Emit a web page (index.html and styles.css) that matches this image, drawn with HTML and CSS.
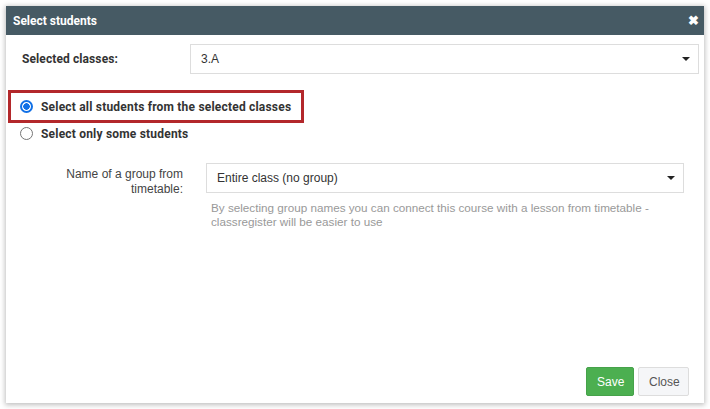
FILE: index.html
```html
<!DOCTYPE html>
<html lang="en">
  <head>
    <meta charset="UTF-8" />
    <title>Select students</title>
    <link rel="stylesheet" href="styles.css">
  </head>
  <body>
    <div class="modal">
      <div class="modal-head">
        <span class="modal-title">Select students</span>
        <span class="close-x">&#10006;</span>
      </div>
      <div class="modal-body">
        <div class="row">
          <label class="lbl">Selected classes:</label>
          <div class="select select-wide">
            <span>3.A</span>
            <span class="caret"></span>
          </div>
        </div>

        <div class="choices">
          <div class="choice marked">
            <span class="radio on"></span>
            <span>Select all students from the selected classes</span>
          </div>
          <div class="choice">
            <span class="radio"></span>
            <span>Select only some students</span>
          </div>
        </div>

        <div class="group-row">
          <label class="group-lbl">Name of a group from timetable:</label>
          <div class="group-field">
            <div class="select">
              <span>Entire class (no group)</span>
              <span class="caret"></span>
            </div>
            <p class="hint">By selecting group names you can connect this course with a lesson from timetable - classregister will be easier to use</p>
          </div>
        </div>
      </div>
      <div class="modal-foot">
        <button class="btn btn-save">Save</button>
        <button class="btn btn-close">Close</button>
      </div>
    </div>
  </body>
</html>
```

FILE: styles.css
```css
body {
  margin: 0;
  background-color: #fff;
  font-family: "Liberation Sans", Arial, sans-serif;
  padding: 6px;
}

.modal {
  width: 698px;
  height: 397px;
  background-color: #fff;
  box-shadow: rgba(0, 0, 0, 0.25) 0px 1px 5px 1px;
  display: flex;
  flex-direction: column;
}

.modal-head {
  height: 29px;
  background-color: #465a64;
  color: #fff;
  display: flex;
  align-items: center;
  justify-content: space-between;
  padding: 0 5px 0 7px;
}

.modal-title {
  font-family: Roboto, sans-serif;
  font-weight: bold;
  font-size: 12px;
}

.close-x {
  font-size: 13px;
  font-weight: bold;
}

.modal-body {
  flex: 1;
  padding: 9px 5px 0 16px;
}

.row {
  display: flex;
  align-items: center;
}

.lbl {
  width: 168px;
  font-family: Roboto, sans-serif;
  font-weight: bold;
  font-size: 12px;
  letter-spacing: 0.1px;
  color: #333;
}

.select {
  height: 30px;
  border: 1px solid #ddd;
  box-sizing: border-box;
  display: flex;
  align-items: center;
  justify-content: space-between;
  padding: 0 8px 0 10px;
  font-size: 12px;
  color: #333;
}

.select-wide {
  width: 509px;
}

.caret {
  width: 0;
  height: 0;
  border-left: 4px solid transparent;
  border-right: 4px solid transparent;
  border-top: 4px solid #222;
}

.choices {
  margin-top: 16px;
  margin-left: -2px;
}

.choice {
  display: flex;
  align-items: center;
  gap: 8px;
  height: 21px;
  font-family: Roboto, sans-serif;
  font-weight: bold;
  font-size: 12px;
  letter-spacing: 0.2px;
  color: #333;
}

.choice.marked {
  border: 3px solid #b3282b;
  width: 281px;
  height: 27px;
  margin-left: -12px;
  padding-left: 9px;
}

.radio {
  width: 13px;
  height: 13px;
  border: 1px solid #767676;
  border-radius: 50%;
  box-sizing: border-box;
  flex-shrink: 0;
}

.radio.on {
  border: 2px solid #1170e6;
  background: radial-gradient(circle, #1170e6 3px, #fff 3.5px);
}

.group-row {
  display: flex;
  margin-top: 19px;
}

.group-lbl {
  width: 161px;
  text-align: right;
  font-size: 12px;
  color: #444;
  padding-top: 4px;
  line-height: 15px;
}

.group-field {
  margin-left: 23px;
  width: 478px;
}

.hint {
  margin: 8px 0 0 5px;
  font-size: 11.7px;
  line-height: 14px;
  color: #999;
}

.modal-foot {
  display: flex;
  justify-content: flex-end;
  gap: 4px;
  padding: 0 15px 7px 0;
}

.btn {
  height: 29px;
  font-family: "Liberation Sans", Arial, sans-serif;
  font-size: 12px;
  border-radius: 2px;
  padding: 0 10px;
  cursor: pointer;
}

.btn-save {
  background-color: #4caf50;
  border: 1px solid #46a24a;
  color: #fff;
  width: 48px;
}

.btn-close {
  background-color: #f5f6f8;
  border: 1px solid #ddd;
  color: #555;
  width: 51px;
}
```
